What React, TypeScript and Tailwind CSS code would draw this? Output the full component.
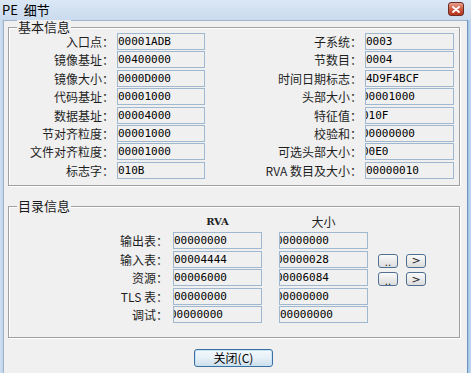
import React from "react";

const cjk = "font-['Noto_Sans_CJK_SC','Noto_Sans',sans-serif]";
const mono = "font-['DejaVu_Sans_Mono',monospace]";

function Field({ v, clip, w }: { v: string; clip?: boolean; w: string }) {
  return (
    <div
      className={`h-[17px] ${w} border border-[#9fb8d0] bg-[#f0f0f0] overflow-hidden flex items-center shrink-0`}
    >
      <span
        className={`${mono} text-[11px] leading-[11px] text-black whitespace-nowrap ${
          clip ? "ml-[-4px]" : "ml-[0px]"
        }`}
      >
        {v}
      </span>
    </div>
  );
}

function Group({
  title,
  className,
  children,
}: {
  title: string;
  className: string;
  children: React.ReactNode;
}) {
  return (
    <div
      className={`relative border border-[#a0a0a0] shadow-[inset_1px_1px_0_#fff,1px_1px_0_#fff] ${className}`}
    >
      <span
        className={`absolute left-[8px] top-[-8px] bg-[#f0f0f0] px-[1px] text-[13px] leading-[14px] text-[#1a1a1a] ${cjk}`}
      >
        {title}
      </span>
      {children}
    </div>
  );
}

function Label({ t, w }: { t: string; w: string }) {
  return (
    <div
      className={`${w} shrink-0 text-right text-[12px] leading-[17px] text-[#1e1e1e] whitespace-nowrap ${cjk}`}
    >
      {t}
    </div>
  );
}

function SmallBtn({ children }: { children: React.ReactNode }) {
  return (
    <div className="w-[20px] h-[14px] shrink-0 rounded-[3px] border border-[#4f6f92] bg-gradient-to-b from-[#fafafa] to-[#dcdcdc] flex items-center justify-center text-[11px] leading-[11px] text-[#222] font-['DejaVu_Sans',sans-serif]">
      {children}
    </div>
  );
}

const left = [
  ["入口点：", "00001ADB", false],
  ["镜像基址：", "00400000", false],
  ["镜像大小：", "0000D000", false],
  ["代码基址：", "00001000", false],
  ["数据基址：", "00004000", false],
  ["节对齐粒度：", "00001000", false],
  ["文件对齐粒度：", "00001000", false],
  ["标志字：", "010B", false],
] as const;

const right = [
  ["子系统：", "0003", false],
  ["节数目：", "0004", false],
  ["时间日期标志：", "4D9F4BCF", false],
  ["头部大小：", "00001000", true],
  ["特征值：", "010F", true],
  ["校验和：", "00000000", true],
  ["可选头部大小：", "00E0", true],
  ["RVA 数目及大小：", "00000010", false],
] as const;

const dir = [
  ["输出表：", "00000000", false, "00000000", true, false],
  ["输入表：", "00004444", false, "00000028", true, true],
  ["资源：", "00006000", false, "00006084", true, true],
  ["TLS 表：", "00000000", false, "00000000", true, false],
  ["调试：", "00000000", true, "00000000", false, false],
] as const;

export default function App() {
  return (
    <div className="w-[471px] h-[373px] overflow-hidden flex flex-col bg-[#c8daee]">
      {/* title bar */}
      <div className="h-[20px] shrink-0 flex items-center bg-gradient-to-b from-[#dbe7f5] to-[#c9dbef]">
        <span className={`ml-[2px] text-[13px] leading-[14px] text-black ${cjk}`}>
          PE&nbsp;&nbsp;细节
        </span>
        <div className="ml-auto mr-[7px] mt-[-2px] w-[16px] h-[14px] rounded-[3px] border border-[#6b2c22] bg-gradient-to-b from-[#e7a08f] via-[#cf5a43] to-[#b8321c] flex items-center justify-center">
          <svg width="8" height="7" viewBox="0 0 8 7">
            <path d="M1 1 L7 6 M7 1 L1 6" stroke="#fff" strokeWidth="1.8" strokeLinecap="round" />
          </svg>
        </div>
      </div>
      <div className="flex flex-1">
        <div className="w-[3px] shrink-0 bg-gradient-to-r from-[#d2e1f2] to-[#bcd1ea]" />
        <div className="flex-1 bg-[#f0f0f0] border-l border-t border-[#a3b3c6] flex flex-col">
          <Group title="基本信息" className="ml-[4px] mt-[6px] w-[452px] h-[159px] pt-[5px]">
            <div className="flex">
              <div className="flex flex-col gap-y-[1.4px]">
                {left.map(([l, v, c]) => (
                  <div key={l} className="flex items-center">
                    <Label t={l} w="w-[105px]" />
                    <div className="w-[3px]" />
                    <Field v={v} clip={c} w="w-[88px]" />
                  </div>
                ))}
              </div>
              <div className="flex flex-col gap-y-[1.4px]">
                {right.map(([l, v, c]) => (
                  <div key={l} className="flex items-center">
                    <Label t={l} w="w-[157px]" />
                    <div className="w-[3px]" />
                    <Field v={v} clip={c} w="w-[89px]" />
                  </div>
                ))}
              </div>
            </div>
          </Group>
          <Group title="目录信息" className="ml-[4px] mt-[20px] w-[452px] h-[132px] pt-[7px]">
            <div className="flex h-[15px] items-center">
              <div className="ml-[164px] w-[89px] text-center text-[10px] leading-[10px] font-bold font-['DejaVu_Serif',serif] text-[#222]">
                RVA
              </div>
              <div className={`ml-[17px] w-[89px] text-center text-[12px] leading-[14px] text-[#222] ${cjk}`}>
                大小
              </div>
            </div>
            <div className="mt-[3px] flex flex-col gap-y-[1.5px]">
              {dir.map(([l, a, ac, b, bc, btn]) => (
                <div key={l} className="flex items-center">
                  <Label t={l} w="w-[159px]" />
                  <div className="w-[5px]" />
                  <Field v={a} clip={ac} w="w-[89px]" />
                  <div className="w-[17px]" />
                  <Field v={b} clip={bc} w="w-[89px]" />
                  {btn && (
                    <div className="flex self-end">
                      <div className="w-[10px]" />
                      <SmallBtn>
                        <span className="mt-[5px] text-[10px] leading-[6px]">..</span>
                      </SmallBtn>
                      <div className="w-[8px]" />
                      <SmallBtn>&gt;</SmallBtn>
                    </div>
                  )}
                </div>
              ))}
            </div>
          </Group>
          <div className="mt-[11px] ml-[190px] w-[79px] h-[18px] rounded-[3px] border border-[#3a6f9f] shadow-[inset_0_0_0_1px_#c6e4f7] bg-gradient-to-b from-[#f4f9fc] via-[#e6f0f7] to-[#cddfeb] flex items-center justify-center">
            <span className={`text-[12px] leading-[14px] text-black ${cjk}`}>关闭(C)</span>
          </div>
        </div>
        <div className="w-[4px] shrink-0 border-l border-[#6f93bf] bg-gradient-to-r from-[#9ec3e6] to-[#c5daf0]" />
      </div>
    </div>
  );
}
